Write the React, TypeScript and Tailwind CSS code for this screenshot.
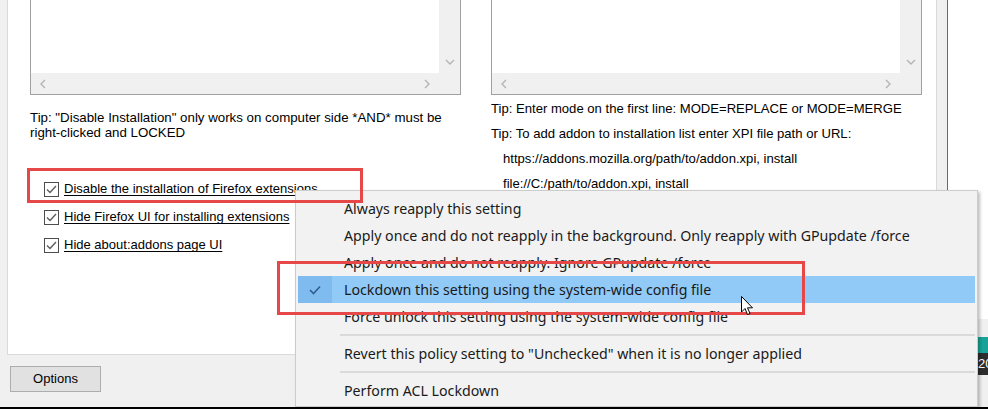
import React from "react";

const dlgFont = { fontFamily: '"Liberation Sans", Arial, sans-serif' };
const menuFont = { fontFamily: '"Noto Sans", "Open Sans", sans-serif' };

function Chevron({ dir }: { dir: "left" | "right" | "down" }) {
  const d =
    dir === "left" ? "M5 1 L1 5 L5 9" : dir === "right" ? "M1 1 L5 5 L1 9" : "M1 1 L5 5 L9 1";
  const w = dir === "down" ? 10 : 6;
  const h = dir === "down" ? 6 : 10;
  return (
    <svg width={w} height={h} viewBox={`0 0 ${w} ${h}`}>
      <path d={d} fill="none" stroke="#b4b4b4" strokeWidth="1.4" />
    </svg>
  );
}

function ScrollBox() {
  return (
    <div className="flex h-[95px] w-[431px] flex-col border border-t-0 border-[#a0a0a0] bg-white">
      <div className="flex flex-1">
        <div className="flex-1 bg-white" />
        <div className="flex w-[21px] items-end justify-center bg-[#f0f0f0] pb-[8px]">
          <Chevron dir="down" />
        </div>
      </div>
      <div className="flex h-[21px] bg-[#f0f0f0]">
        <div className="flex flex-1 items-center justify-between px-[9px]">
          <Chevron dir="left" />
          <Chevron dir="right" />
        </div>
        <div className="w-[21px]" />
      </div>
    </div>
  );
}

function Check({ label }: { label: string }) {
  return (
    <div className="flex h-[28px] items-center gap-[5px] pl-[14px]">
      <div className="flex h-[15px] w-[15px] items-center justify-center border border-[#4d4d4d] bg-white">
        <svg width="11" height="9" viewBox="0 0 11 9">
          <path d="M1 4.5 L4 7.5 L10 1" fill="none" stroke="#5a5a5a" strokeWidth="1.3" />
        </svg>
      </div>
      <span className="whitespace-nowrap text-[13px] text-black underline underline-offset-2">{label}</span>
    </div>
  );
}

function MenuItem({ text, active }: { text: string; active?: boolean }) {
  return (
    <div className={`flex h-[27px] items-center ${active ? "bg-[#91c9f7]" : ""}`}>
      <div className={`flex h-full w-[34px] items-center justify-center ${active ? "bg-[#80bbf0]" : ""}`}>
        {active && (
          <svg width="12" height="10" viewBox="0 0 12 10">
            <path d="M1 5 L4.5 8.5 L11 1.5" fill="none" stroke="#2f5f8f" strokeWidth="1.6" />
          </svg>
        )}
      </div>
      <span className="pl-[12px] whitespace-nowrap text-[14.2px] text-[#1a1a1a]">{text}</span>
    </div>
  );
}

function Sep() {
  return (
    <div className="flex h-[10px] items-center pl-[42px]">
      <div className="h-[2px] flex-1 bg-[#dadada]" />
    </div>
  );
}

export default function App() {
  return (
    <div className="relative h-[409px] w-[988px] overflow-hidden bg-[#f0f0f0]" style={dlgFont}>
      <div className="flex h-[407px]">
        <div className="flex w-[937px] flex-col">
          <div className="ml-[7px] h-[355px] w-[930px] border-x border-b border-[#dadada] bg-white">
            <div className="flex gap-[30px] pl-[22px]">
              <div className="flex w-[431px] flex-col">
                <ScrollBox />
                <div className="mt-[15px] whitespace-nowrap text-[13.3px] leading-[15px] text-black">
                  Tip: "Disable Installation" only works on computer side *AND* must be
                  <br />
                  right-clicked and LOCKED
                </div>
                <div className="mt-[35px] flex flex-col">
                  <Check label="Disable the installation of Firefox extensions" />
                  <Check label="Hide Firefox UI for installing extensions" />
                  <Check label="Hide about:addons page UI" />
                </div>
              </div>
              <div className="flex w-[431px] flex-col">
                <ScrollBox />
                <div className="mt-[1px] whitespace-nowrap text-[13.1px] leading-[25px] text-black">
                  <div>Tip: Enter mode on the first line: MODE=REPLACE or MODE=MERGE</div>
                  <div>Tip: To add addon to installation list enter XPI file path or URL:</div>
                  <div className="pl-[12px]">https://addons.mozilla.org/path/to/addon.xpi, install</div>
                  <div className="pl-[12px]">file://C:/path/to/addon.xpi, install</div>
                </div>
              </div>
            </div>
          </div>
          <div className="pl-[10px] pt-[11px]">
            <button className="h-[26px] w-[91px] border border-[#adadad] bg-[#e1e1e1] text-[13px] text-black">
              Options
            </button>
          </div>
        </div>
        <div className="w-[10px] bg-[#f0f0f0]" />
        <div className="w-[1px] bg-[#1f7bd4]" />
        <div className="flex w-[40px] flex-col">
          <div className="h-[319px] bg-white" />
          <div className="h-[18px] bg-[#f0f0f0]" />
          <div className="h-[16px] bg-[#17a397]" />
          <div className="flex h-[22px] items-center bg-[#2d2d2d] pl-[30px] text-[13px] text-white">20</div>
          <div className="flex-1 bg-[#f0f0f0]" />
        </div>
      </div>
      <div className="h-[2px] bg-black" />

      {/* context menu */}
      <div
        className="absolute left-[295px] top-[190px] h-[217px] w-[683px] border border-[#cccccc] bg-[#f2f2f2] px-[2px] pt-[4px] shadow-[2px_2px_3px_rgba(0,0,0,0.25)]"
        style={menuFont}
      >
        <MenuItem text="Always reapply this setting" />
        <MenuItem text="Apply once and do not reapply in the background. Only reapply with GPupdate /force" />
        <MenuItem text="Apply once and do not reapply. Ignore GPupdate /force" />
        <MenuItem text="Lockdown this setting using the system-wide config file" active />
        <MenuItem text="Force unlock this setting using the system-wide config file" />
        <Sep />
        <MenuItem text={'Revert this policy setting to "Unchecked" when it is no longer applied'} />
        <Sep />
        <MenuItem text="Perform ACL Lockdown" />
      </div>

      {/* annotation boxes */}
      <div className="absolute left-[27px] top-[168px] h-[35px] w-[336px] border-[3px] border-[#e64848]" />
      <div className="absolute left-[277px] top-[261px] h-[54px] w-[528px] border-[3px] border-[#e64848]" />

      {/* mouse pointer */}
      <svg className="absolute left-[741px] top-[296px]" width="13" height="20" viewBox="0 0 13 20">
        <path
          d="M0.5 0.5 L0.5 16 L4 12.5 L6.5 18.5 L9 17.5 L6.5 11.8 L11.5 11.8 Z"
          fill="#ffffff"
          stroke="#000000"
          strokeWidth="1"
        />
      </svg>
    </div>
  );
}
